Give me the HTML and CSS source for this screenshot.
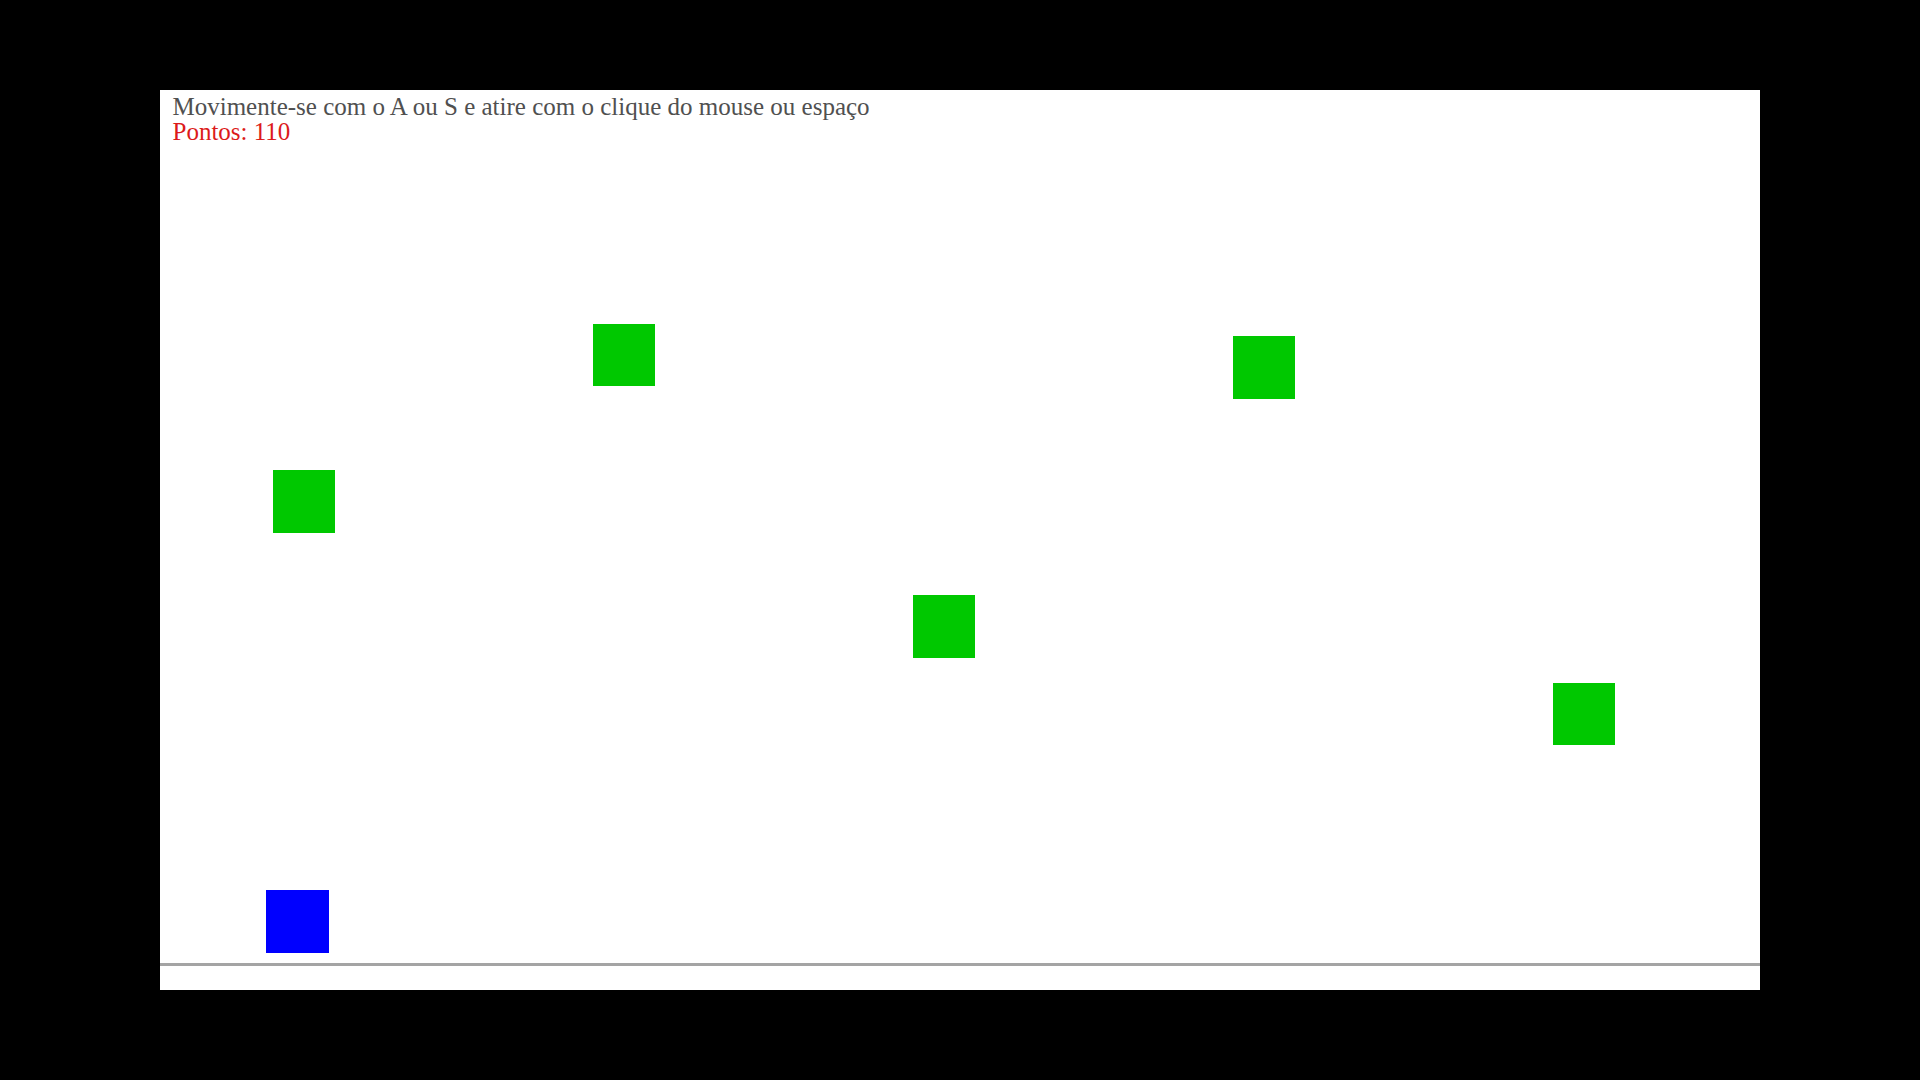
FILE: index.html
```html
<!DOCTYPE html>
<html lang="pt">
<head>
<meta charset="utf-8">
<title>Jogo</title>
<link rel="stylesheet" href="styles.css">
</head>
<body>
<div class="screen">
  <div class="stage">
    <div class="hud">
      <div class="help">Movimente-se com o A ou S e atire com o clique do mouse ou espaço</div>
      <div class="score">Pontos: 110</div>
    </div>
    <div class="enemy" style="left:112.5px;top:380px"></div>
    <div class="enemy" style="left:432.5px;top:233.5px"></div>
    <div class="enemy" style="left:752.5px;top:505px"></div>
    <div class="enemy" style="left:1072.5px;top:246px"></div>
    <div class="enemy" style="left:1392.5px;top:592.5px"></div>
    <div class="player" style="left:106px;top:800px"></div>
    <div class="ground"></div>
  </div>
</div>
</body>
</html>
```
FILE: styles.css
```css
html, body {
  margin: 0;
  padding: 0;
  background: #000;
  height: 100%;
}
.screen {
  width: 1920px;
  height: 1080px;
  display: flex;
  align-items: center;
  justify-content: center;
}
.stage {
  position: relative;
  width: 1600px;
  height: 900px;
  background: #fff;
  overflow: hidden;
}
.hud {
  padding: 4px 0 0 12.5px;
  font-family: "Liberation Serif", "Times New Roman", serif;
  font-size: 25px;
  line-height: 25px;
}
.help {
  color: #505050;
}
.score {
  color: #dc1a1a;
}
.enemy, .player {
  position: absolute;
  width: 62.5px;
  height: 62.5px;
}
.enemy {
  background: #00c800;
}
.player {
  background: #0000ff;
}
.ground {
  position: absolute;
  left: 0;
  right: 0;
  top: 873px;
  height: 3px;
  background: #a4a4a4;
}
```
